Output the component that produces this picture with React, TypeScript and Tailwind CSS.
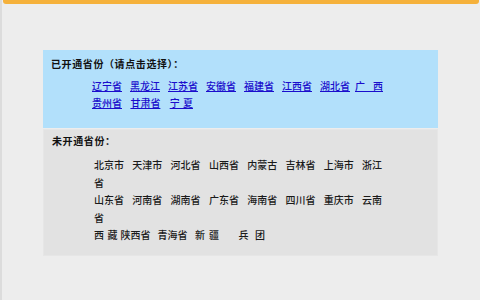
const cjk = "font-['Noto_Sans_CJK_SC','Noto_Sans',sans-serif]";

// each entry: [first part, classes of first part, rest]
// the first part carries a letter-spacing where the original had a wide space
type Item = { a: string; ac?: string; b?: string; ml: string };

const OPEN_ROWS: Item[][] = [
  [
    { a: "辽宁省", ml: "" },
    { a: "黑龙江", ml: "ml-[8px]" },
    { a: "江苏省", ml: "ml-[8px]" },
    { a: "安徽省", ml: "ml-[8px]" },
    { a: "福建省", ml: "ml-[8px]" },
    { a: "江西省", ml: "ml-[8px]" },
    { a: "湖北省", ml: "ml-[8px]" },
    { a: "广", ac: "tracking-[8px]", b: "西", ml: "ml-[5px]" },
  ],
  [
    { a: "贵州省", ml: "" },
    { a: "甘肃省", ml: "ml-[8.4px]" },
    { a: "宁", ac: "tracking-[3.3px]", b: "夏", ml: "ml-[9.3px]" },
  ],
];

const CLOSED_ROWS: Item[][] = [
  [
    { a: "北京市", ml: "" },
    { a: "天津市", ml: "ml-[8.3px]" },
    { a: "河北省", ml: "ml-[8.3px]" },
    { a: "山西省", ml: "ml-[8.3px]" },
    { a: "内蒙古", ml: "ml-[8.3px]" },
    { a: "吉林省", ml: "ml-[8.3px]" },
    { a: "上海市", ml: "ml-[8.3px]" },
    { a: "浙江", ml: "ml-[8.3px]" },
  ],
  [{ a: "省", ml: "" }],
  [
    { a: "山东省", ml: "" },
    { a: "河南省", ml: "ml-[8.3px]" },
    { a: "湖南省", ml: "ml-[8.3px]" },
    { a: "广东省", ml: "ml-[8.3px]" },
    { a: "海南省", ml: "ml-[8.3px]" },
    { a: "四川省", ml: "ml-[8.3px]" },
    { a: "重庆市", ml: "ml-[8.3px]" },
    { a: "云南", ml: "ml-[8.3px]" },
  ],
  [{ a: "省", ml: "" }],
  [
    { a: "西", ac: "tracking-[3.5px]", b: "藏", ml: "" },
    { a: "陕西省", ml: "ml-[3px]" },
    { a: "青海省", ml: "ml-[7px]" },
    { a: "新", ac: "tracking-[4px]", b: "疆", ml: "ml-[7.5px]" },
    { a: "兵", ac: "tracking-[6.5px]", b: "团", ml: "ml-[19.5px]" },
  ],
];

function Text({ item }: { item: Item }) {
  return (
    <>
      <span className={item.ac}>{item.a}</span>
      {item.b}
    </>
  );
}

export default function App() {
  return (
    <div className={`w-[480px] h-[300px] bg-[#ededed] border-l-2 border-[#dcdcdc] overflow-hidden ${cjk}`}>
      <div className="mx-[1px] h-[4px] rounded-b-[3px] bg-[#f5b13b]" />

      <div className="ml-[41px] mt-[46px] w-[395px]">
        {/* opened provinces */}
        <div className="bg-[#b2e0fb] px-2 pt-[7px] pb-[17px]">
          <div className="text-[10px] leading-[14px] font-bold tracking-[0.6px] text-[#111]">
            已开通省份（请点击选择）：
          </div>
          <div className="mt-[6px] pl-[41px]">
            {OPEN_ROWS.map((row, i) => (
              <div key={i} className="whitespace-nowrap text-[10px] leading-[17px] font-medium">
                {row.map((p) => (
                  <a key={p.a} href="#" className={`text-[#1a0dcc] underline ${p.ml}`}>
                    <Text item={p} />
                  </a>
                ))}
              </div>
            ))}
          </div>
        </div>

        {/* not yet opened */}
        <div className="mt-[1px] bg-[#e2e2e2] border border-[#e6e6e6] px-2 pt-[4px] pb-[11px]">
          <div className="text-[10px] leading-[14px] font-bold tracking-[0.6px] text-[#111]">
            未开通省份：
          </div>
          <div className="mt-[8px] pl-[42px]">
            {CLOSED_ROWS.map((row, i) => (
              <div key={i} className="whitespace-nowrap text-[10px] leading-[17.5px] text-[#1a1a1a] font-medium">
                {row.map((p) => (
                  <span key={p.a} className={p.ml}>
                    <Text item={p} />
                  </span>
                ))}
              </div>
            ))}
          </div>
        </div>
      </div>
    </div>
  );
}
